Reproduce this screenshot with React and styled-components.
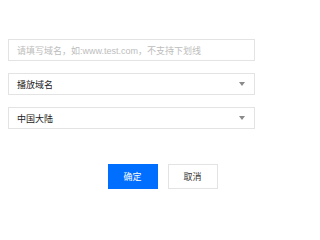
import React from "react";
import styled, { createGlobalStyle } from "styled-components";

const GlobalStyle = createGlobalStyle`
  html, body {
    margin: 0;
    padding: 0;
    background: #fff;
  }
  body {
    font-family: "Liberation Sans", "Noto Sans CJK SC", sans-serif;
  }
`;

const Page = styled.div`
  width: 320px;
  height: 200px;
  padding-top: 39px;
  box-sizing: border-box;
`;

const Form = styled.div`
  width: 247px;
  margin-left: 8px;
  display: flex;
  flex-direction: column;
  gap: 12px;
`;

const Field = styled.div`
  height: 22px;
  box-sizing: border-box;
  border: 1px solid #e3e3e3;
  display: flex;
  align-items: center;
  justify-content: space-between;
  padding: 0 9px 0 8px;
  font-size: 9px;
  color: ${(p) => (p.$placeholder ? "#bdbdbd" : "#222")};
  white-space: nowrap;
`;

const Arrow = styled.span`
  width: 0;
  height: 0;
  border-left: 3px solid transparent;
  border-right: 3px solid transparent;
  border-top: 4px solid #8a8a8a;
`;

const Actions = styled.div`
  display: flex;
  justify-content: center;
  gap: 10px;
  margin-top: 35px;
  padding-left: 5px;
`;

const Button = styled.button`
  width: 50px;
  height: 25px;
  box-sizing: border-box;
  font-family: inherit;
  font-size: 9px;
  padding: 0;
  cursor: pointer;
  border: 1px solid ${(p) => (p.$primary ? "#006eff" : "#e3e3e3")};
  background: ${(p) => (p.$primary ? "#006eff" : "#fff")};
  color: ${(p) => (p.$primary ? "#fff" : "#333")};
`;

export default function App() {
  return (
    <Page>
      <GlobalStyle />
      <Form>
        <Field $placeholder>请填写域名，如:www.test.com，不支持下划线</Field>
        <Field>
          播放域名
          <Arrow />
        </Field>
        <Field>
          中国大陆
          <Arrow />
        </Field>
      </Form>
      <Actions>
        <Button $primary>确定</Button>
        <Button>取消</Button>
      </Actions>
    </Page>
  );
}
